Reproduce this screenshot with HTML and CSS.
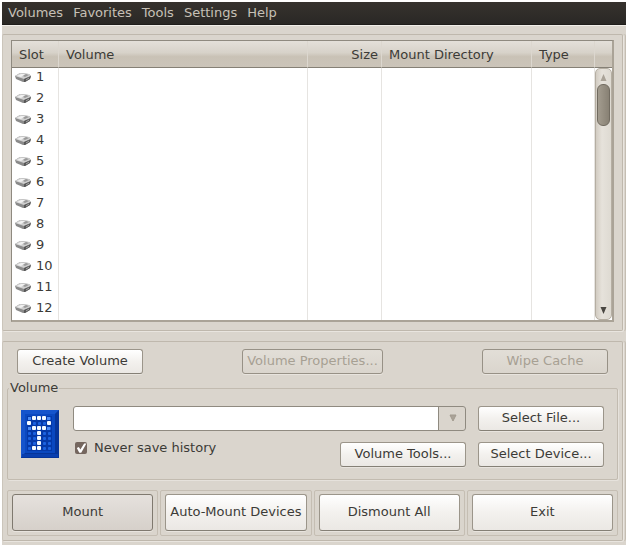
FILE: index.html
```html
<!DOCTYPE html>
<html lang="en">
<head>
    <meta charset="UTF-8">
    <meta name="viewport" content="width=device-width, initial-scale=1.0">
    <title>Volumes</title>
    <link rel="stylesheet" href="styles.css">
</head>
<body>
    <!-- Shared icon for the slot rows -->
    <svg class="icon-defs" aria-hidden="true">
        <symbol id="drive" viewBox="0 0 16 12">
            <path d="M0 5 L5 2 L14 3 L16 5 L15 8 L10 11 L8 11 L1 8 Z" fill="#8a8a8a"/>
            <path d="M0 5 L5 2 L14 3 L16 5 L9 8 Z" fill="#cfcfcf"/>
            <path d="M2 5 L6 3 L10 3 L6 6 Z" fill="#f1f1f1"/>
            <path d="M8 5 L11 3 L14 4 L10 6 Z" fill="#999"/>
            <path d="M9 8 L16 5 L15 8 L10 11 L9 11 Z" fill="#585858"/>
            <path d="M11 9 L14 7" stroke="#aaa" stroke-width="1"/>
        </symbol>
    </svg>

    <div class="window">
        <nav class="menubar">
            <a href="#">Volumes</a>
            <a href="#">Favorites</a>
            <a href="#">Tools</a>
            <a href="#">Settings</a>
            <a href="#">Help</a>
        </nav>

        <main class="content">
            <section class="panel list-panel">
                <div class="slot-list">
                    <table class="slots">
                        <colgroup>
                            <col class="col-slot">
                            <col class="col-volume">
                            <col class="col-size">
                            <col class="col-directory">
                            <col class="col-type">
                            <col class="col-scroll">
                        </colgroup>
                        <thead>
                            <tr><th>Slot</th><th>Volume</th><th class="size">Size</th><th>Mount Directory</th><th>Type</th><th></th></tr>
                        </thead>
                        <tbody>
                            <tr><td><svg class="drive"><use href="#drive"/></svg>1</td><td></td><td></td><td></td><td></td><td></td></tr>
                            <tr><td><svg class="drive"><use href="#drive"/></svg>2</td><td></td><td></td><td></td><td></td><td></td></tr>
                            <tr><td><svg class="drive"><use href="#drive"/></svg>3</td><td></td><td></td><td></td><td></td><td></td></tr>
                            <tr><td><svg class="drive"><use href="#drive"/></svg>4</td><td></td><td></td><td></td><td></td><td></td></tr>
                            <tr><td><svg class="drive"><use href="#drive"/></svg>5</td><td></td><td></td><td></td><td></td><td></td></tr>
                            <tr><td><svg class="drive"><use href="#drive"/></svg>6</td><td></td><td></td><td></td><td></td><td></td></tr>
                            <tr><td><svg class="drive"><use href="#drive"/></svg>7</td><td></td><td></td><td></td><td></td><td></td></tr>
                            <tr><td><svg class="drive"><use href="#drive"/></svg>8</td><td></td><td></td><td></td><td></td><td></td></tr>
                            <tr><td><svg class="drive"><use href="#drive"/></svg>9</td><td></td><td></td><td></td><td></td><td></td></tr>
                            <tr><td><svg class="drive"><use href="#drive"/></svg>10</td><td></td><td></td><td></td><td></td><td></td></tr>
                            <tr><td><svg class="drive"><use href="#drive"/></svg>11</td><td></td><td></td><td></td><td></td><td></td></tr>
                            <tr><td><svg class="drive"><use href="#drive"/></svg>12</td><td></td><td></td><td></td><td></td><td></td></tr>
                        </tbody>
                    </table>
                    <div class="scrollbar">
                        <svg class="scroll-arrow" viewBox="0 0 7 7"><path d="M3.5 0 L6.5 7 H0.5 Z" fill="#aaa398"/></svg>
                        <div class="scroll-thumb"></div>
                        <svg class="scroll-arrow scroll-down" viewBox="0 0 7 7"><path d="M0.5 0 H6.5 L3.5 7 Z" fill="#4a4742"/></svg>
                    </div>
                </div>
            </section>

            <section class="panel control-panel">
                <div class="volume-actions">
                    <button type="button">Create Volume</button>
                    <button type="button" class="wide" disabled>Volume Properties...</button>
                    <button type="button" disabled>Wipe Cache</button>
                </div>

                <fieldset class="volume-group">
                    <legend>Volume</legend>
                    <svg class="logo" viewBox="0 0 38 48" aria-hidden="true">
                        <defs>
                            <pattern id="dots" x="6" y="6" width="5" height="5" patternUnits="userSpaceOnUse">
                                <rect x="1" y="1" width="3" height="3" rx="1" fill="#1c62e0"/>
                            </pattern>
                        </defs>
                        <rect width="38" height="48" fill="#0845b8"/>
                        <path d="M0 0 H38 L34 4 H4 V43 L0 48 Z" fill="#1554cc"/>
                        <path d="M38 0 V48 H0 L4 43 H34 V4 Z" fill="#06359a"/>
                        <rect x="1" y="44" width="36" height="3" fill="#0a3fae"/>
                        <rect x="4" y="4" width="30" height="39" fill="#0a48c0"/>
                        <rect x="6" y="6" width="25" height="35" fill="#0539a8"/>
                        <rect x="6" y="6" width="25" height="35" fill="url(#dots)"/>
                        <g fill="#f4faff">
                            <rect x="11" y="6" width="4" height="4" rx="1"/>
                            <rect x="16" y="6" width="4" height="4" rx="1"/>
                            <rect x="21" y="6" width="4" height="4" rx="1"/>
                            <rect x="6" y="11" width="4" height="4" rx="1"/>
                            <rect x="26" y="11" width="4" height="4" rx="1"/>
                            <rect x="11" y="16" width="4" height="4" rx="1"/>
                            <rect x="16" y="16" width="4" height="4" rx="1"/>
                            <rect x="21" y="16" width="4" height="4" rx="1"/>
                            <rect x="16" y="21" width="4" height="4" rx="1"/>
                            <rect x="16" y="26" width="4" height="4" rx="1"/>
                            <rect x="16" y="31" width="4" height="4" rx="1"/>
                            <rect x="16" y="36" width="4" height="4" rx="1"/>
                            <rect x="11" y="36" width="4" height="4" rx="1"/>
                        </g>
                        <g fill="#4c8cf5">
                            <rect x="7" y="7" width="3" height="3"/>
                            <rect x="26" y="7" width="3" height="3"/>
                            <rect x="7" y="17" width="3" height="3"/>
                            <rect x="26" y="17" width="3" height="3"/>
                        </g>
                    </svg>
                    <div class="volume-fields">
                        <div class="combo">
                            <select aria-label="Volume path">
                                <option></option>
                            </select>
                            <svg class="combo-arrow" viewBox="0 0 8 8"><path d="M1 1 H7 L4 7 Z" fill="#aaa398" stroke="#a19a8e"/></svg>
                        </div>
                        <button type="button">Select File...</button>
                        <div class="history-row">
                            <label class="history"><input type="checkbox" checked>Never save history</label>
                            <button type="button">Volume Tools...</button>
                        </div>
                        <button type="button">Select Device...</button>
                    </div>
                </fieldset>

                <div class="main-actions">
                    <div class="action"><button type="button" class="default">Mount</button></div>
                    <div class="action"><button type="button">Auto-Mount Devices</button></div>
                    <div class="action"><button type="button">Dismount All</button></div>
                    <div class="action"><button type="button">Exit</button></div>
                </div>
            </section>
        </main>
    </div>
</body>
</html>
```
FILE: styles.css
```css
* {
    box-sizing: border-box;
}
body {
    margin: 0;
    padding: 2px;
    background-color: #fff;
    color: #3c3b37;
    font-family: "DejaVu Sans", sans-serif;
    font-size: 13px;
    line-height: 20px;
}
button,
select {
    font: inherit;
    color: inherit;
}
.icon-defs {
    position: absolute;
    width: 0;
    height: 0;
}
.window {
    background-color: #dad5cd;
}

/* Menu bar */
.menubar {
    display: flex;
    gap: 10px;
    height: 23px;
    padding: 0 6px;
    background: linear-gradient(#36322e, #2a2825);
    border-bottom: 1px solid #1f1d1b;
    line-height: 22px;
}
.menubar a {
    color: #c6c0b6;
    text-decoration: none;
}

.content {
    padding: 8px 3px 4px 0;
    border-top: 1px solid #f1eee9;
}
.panel {
    border: 1px solid #bfb8ad;
    border-left-color: #cbc5bb;
    border-radius: 2px;
    box-shadow: 1px 1px #e9e5df, 2px 0 #dad5cd, 3px 0 #c5beb3;
}
.list-panel {
    padding: 5px 8px 8px;
}
.control-panel {
    margin-top: 10px;
    padding: 7px 4px 4px;
}

/* Slot list */
.slot-list {
    display: grid;
    border: 1px solid #8f8a80;
    border-width: 1px 2px 2px 1px;
    border-color: #8f8a80 #aaa397 #aaa397 #8f8a80;
    background-color: #fff;
}
.slots {
    grid-area: 1 / 1;
    width: 100%;
    table-layout: fixed;
    border-collapse: separate;
    border-spacing: 0;
}
.col-slot {
    width: 47px;
}
.col-size {
    width: 74px;
}
.col-directory {
    width: 150px;
}
.col-type {
    width: 63px;
}
.col-scroll {
    width: 17px;
}
.slots th {
    height: 27px;
    padding: 2px 7px 0;
    background: linear-gradient(#e4e0da, #d7d2c9 45%, #c9c2b6 60%, #cbc4b9);
    border-right: 1px solid #dcd7cf;
    border-bottom: 1px solid #858076;
    font-weight: normal;
    text-align: left;
    white-space: nowrap;
}
.slots .size {
    padding-right: 3px;
    text-align: right;
}
.slots td {
    height: 21px;
    padding: 0 3px;
    border-right: 1px solid #e6e4e1;
    line-height: 18px;
    vertical-align: top;
    white-space: nowrap;
}
.slots th:last-child,
.slots td:last-child {
    border-right: none;
}
.drive {
    width: 16px;
    height: 12px;
    margin-right: 5px;
    vertical-align: -2px;
}
.scrollbar {
    grid-area: 1 / 1;
    justify-self: end;
    display: flex;
    flex-direction: column;
    align-items: center;
    width: 17px;
    margin-top: 27px;
    padding: 5px 0;
    background: linear-gradient(90deg, #d2ccc2, #e6e2db 40%, #dedad2);
    border: 1px solid #b5aea2;
    border-radius: 5px;
}
.scroll-arrow {
    width: 7px;
    height: 7px;
}
.scroll-thumb {
    width: 13px;
    height: 42px;
    margin-top: 3px;
    background: linear-gradient(90deg, #a39c8f, #888174);
    border: 1px solid #716b60;
    border-radius: 6px;
}
.scroll-down {
    margin-top: auto;
}

/* Buttons */
button {
    width: 126px;
    height: 25px;
    padding: 0 0 2px;
    background: linear-gradient(#fff, #f3f1ee 50%, #ebe8e4);
    border: 1px solid #9b958a;
    border-bottom-color: #858076;
    border-radius: 3px;
    box-shadow: 0 1px #e8e4de;
    line-height: 20px;
    white-space: nowrap;
}
button:disabled {
    background: linear-gradient(#e2ded7, #dad5cd);
    border-color: #979186;
    color: #a7a093;
}
.wide {
    width: 141px;
}
.volume-actions {
    display: flex;
    justify-content: space-between;
    padding: 0 10px;
}

/* Volume group */
.volume-group {
    display: flex;
    gap: 14px;
    margin: 4px 0 0;
    padding: 8px 13px 12px;
    border: 1px solid #c2bbb0;
    border-radius: 2px;
    box-shadow: 1px 1px #e6e2dc;
}
.volume-group legend {
    margin-left: -12px;
    padding: 0 1px;
}
.logo {
    flex: none;
    width: 38px;
    height: 48px;
    margin-top: 4px;
}
.volume-fields {
    flex: 1;
    display: grid;
    grid-template-columns: 1fr auto;
    gap: 11px 12px;
}
.combo {
    position: relative;
}
.combo select {
    display: block;
    width: 100%;
    height: 25px;
    appearance: none;
    background: linear-gradient(90deg, #8f8a80 1px, #dad5cd 1px) right / 27px 100% no-repeat #fff;
    border: 1px solid #8f8a80;
    border-radius: 3px;
}
.combo-arrow {
    position: absolute;
    top: 8px;
    right: 9px;
    width: 8px;
    height: 8px;
    pointer-events: none;
}
.history-row {
    display: flex;
    align-items: flex-start;
    justify-content: space-between;
}
.history {
    display: flex;
    gap: 7px;
    padding-left: 2px;
    align-items: center;
    line-height: 10px;
}
.history input {
    appearance: none;
    width: 12px;
    height: 12px;
    margin: 0;
    background-color: #75675f;
    border-radius: 2px;
}
.history input:checked::after {
    content: "";
    display: block;
    width: 12px;
    height: 12px;
    background-color: #fff;
    clip-path: polygon(15% 50%, 32% 42%, 45% 62%, 76% 12%, 95% 12%, 52% 90%, 36% 90%);
}

/* Bottom row */
.main-actions {
    display: grid;
    grid-template-columns: repeat(4, 1fr);
    gap: 2px;
    margin-top: 10px;
}
.action {
    padding: 3px 4px 4px;
    border: 1px solid #c5beb3;
    border-radius: 2px;
}
.action button {
    display: block;
    width: 100%;
    height: 37px;
}
.action .default {
    background: linear-gradient(#e5e1dd, #d6d0ca);
    border-color: #7f796f;
}
```
